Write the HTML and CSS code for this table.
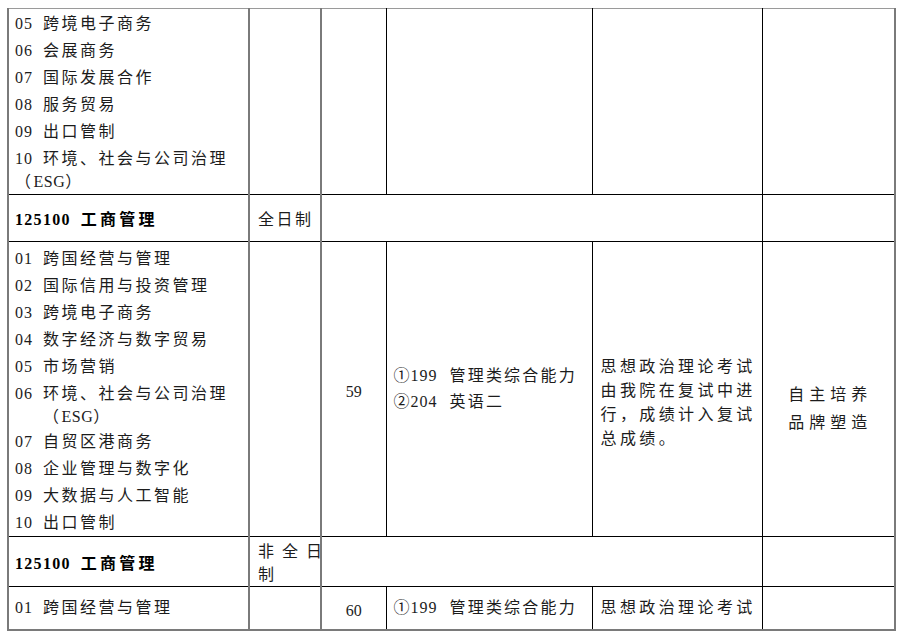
FILE: index.html
```html
<!DOCTYPE html>
<html lang="zh">
<head>
<meta charset="utf-8">
<link rel="stylesheet" href="styles.css">
</head>
<body>
<div class="wrap">
<table class="grid">
  <colgroup>
    <col class="c1"><col class="c2"><col class="c3"><col class="c4"><col class="c5"><col class="c6">
  </colgroup>
  <tr class="r1">
    <td class="dir top">
      <div class="item"><span class="n">05</span>跨境电子商务</div>
      <div class="item"><span class="n">06</span>会展商务</div>
      <div class="item"><span class="n">07</span>国际发展合作</div>
      <div class="item"><span class="n">08</span>服务贸易</div>
      <div class="item"><span class="n">09</span>出口管制</div>
      <div class="item"><span class="n">10</span>环境、社会与公司治理<div class="wrapline">（<span class="lat">ESG</span>）</div></div>
    </td>
    <td class="g"></td><td class="g"></td><td></td><td></td><td></td>
  </tr>
  <tr class="r2">
    <td class="major"><span class="n">125100</span>工商管理</td>
    <td class="g mode">全日制</td>
    <td class="g" colspan="3"></td>
    <td></td>
  </tr>
  <tr class="r3">
    <td class="dir top top3">
      <div class="item"><span class="n">01</span>跨国经营与管理</div>
      <div class="item"><span class="n">02</span>国际信用与投资管理</div>
      <div class="item"><span class="n">03</span>跨境电子商务</div>
      <div class="item"><span class="n">04</span>数字经济与数字贸易</div>
      <div class="item"><span class="n">05</span>市场营销</div>
      <div class="item"><span class="n">06</span>环境、社会与公司治理<div class="wrapline hang">（<span class="lat">ESG</span>）</div></div>
      <div class="item"><span class="n">07</span>自贸区港商务</div>
      <div class="item"><span class="n">08</span>企业管理与数字化</div>
      <div class="item"><span class="n">09</span>大数据与人工智能</div>
      <div class="item"><span class="n">10</span>出口管制</div>
    </td>
    <td class="g"></td>
    <td class="g num">59</td>
    <td class="exam"><span class="n2">①199</span>管理类综合能力<br><span class="n2">②204</span>英语二</td>
    <td class="note">思想政治理论考试<br>由我院在复试中进<br>行，成绩计入复试<br>总成绩。</td>
    <td class="feat">自主培养<br>品牌塑造</td>
  </tr>
  <tr class="r4">
    <td class="major"><span class="n">125100</span>工商管理</td>
    <td class="g mode2">非全日<br>制</td>
    <td class="g" colspan="3"></td>
    <td></td>
  </tr>
  <tr class="r5">
    <td class="dir"><span class="n">01</span>跨国经营与管理</td>
    <td class="g"></td>
    <td class="g num">60</td>
    <td class="exam"><span class="n2">①199</span>管理类综合能力</td>
    <td class="note one">思想政治理论考试</td>
    <td></td>
  </tr>
</table>
</div>
</body>
</html>
```
FILE: styles.css
```css
html, body {
  margin: 0;
  padding: 0;
  background: #ffffff;
}

.wrap {
  padding: 8px 0 0 7px;
}

.grid {
  border-collapse: collapse;
  table-layout: fixed;
  width: 887px;
  font-family: "Liberation Serif", "Noto Sans CJK SC", serif;
  font-size: 16px;
  color: #1c1c1c;
  border-top: 1px solid #9a9a9a;
  border-left: 2px solid #7a7a7a;
  border-right: 2px solid #7a7a7a;
  border-bottom: 2px solid #7a7a7a;
}

.c1 { width: 241px; }
.c2 { width: 72px; }
.c3 { width: 65px; }
.c4 { width: 206px; }
.c5 { width: 170px; }
.c6 { width: 133px; }

.grid td {
  border-top: 1px solid #000;
  border-bottom: 1px solid #000;
  border-left: 1px solid #000;
  border-right: 1px solid #000;
  padding: 0;
  vertical-align: middle;
  overflow: visible;
}

.grid td.g {
  border-left: 2px solid #7a7a7a;
}

.grid tr:first-child td {
  border-top: 1px solid #9a9a9a;
}

.grid tr:last-child td {
  border-bottom: 2px solid #7a7a7a;
}

.r1 { height: 186px; }
.r2 { height: 47px; }
.r3 { height: 295px; }
.r4 { height: 50px; }
.r5 { height: 43px; }

.dir {
  padding-left: 6px !important;
  letter-spacing: 2.5px;
  line-height: 24px;
}

.top {
  vertical-align: top !important;
  padding-top: 3px !important;
}

.top3 {
  padding-top: 5px !important;
}

.item + .item {
  margin-top: 3px;
}

.wrapline {
  line-height: 22px;
}

.top3 .wrapline {
  line-height: 21px;
}

.n {
  letter-spacing: 1px;
  margin-right: 10px;
}

.lat {
  letter-spacing: 0.5px;
}

.hang {
  padding-left: 28px;
}

.major {
  padding-left: 6px !important;
  font-weight: bold;
  letter-spacing: 3.2px;
  color: #000;
}

.major .n {
  letter-spacing: 1.3px;
}

.mode {
  padding-left: 8px !important;
  letter-spacing: 2.5px;
}

.mode2 {
  padding-left: 8px !important;
  padding-top: 2px !important;
  letter-spacing: 8px;
  line-height: 23px;
  white-space: nowrap;
}

.num {
  text-align: center;
  padding-top: 6px !important;
}

.exam {
  padding-left: 7px !important;
  letter-spacing: 2.2px;
  line-height: 26px;
}

.n2 {
  letter-spacing: 1px;
  margin-right: 12px;
}

.note {
  padding: 28px 0 0 8px !important;
  letter-spacing: 3.4px;
  line-height: 24px;
  white-space: nowrap;
}

.note.one {
  padding-top: 0 !important;
}

.feat {
  text-align: center;
  letter-spacing: 5px;
  line-height: 28px;
  padding: 39px 0 0 4px !important;
}
```
